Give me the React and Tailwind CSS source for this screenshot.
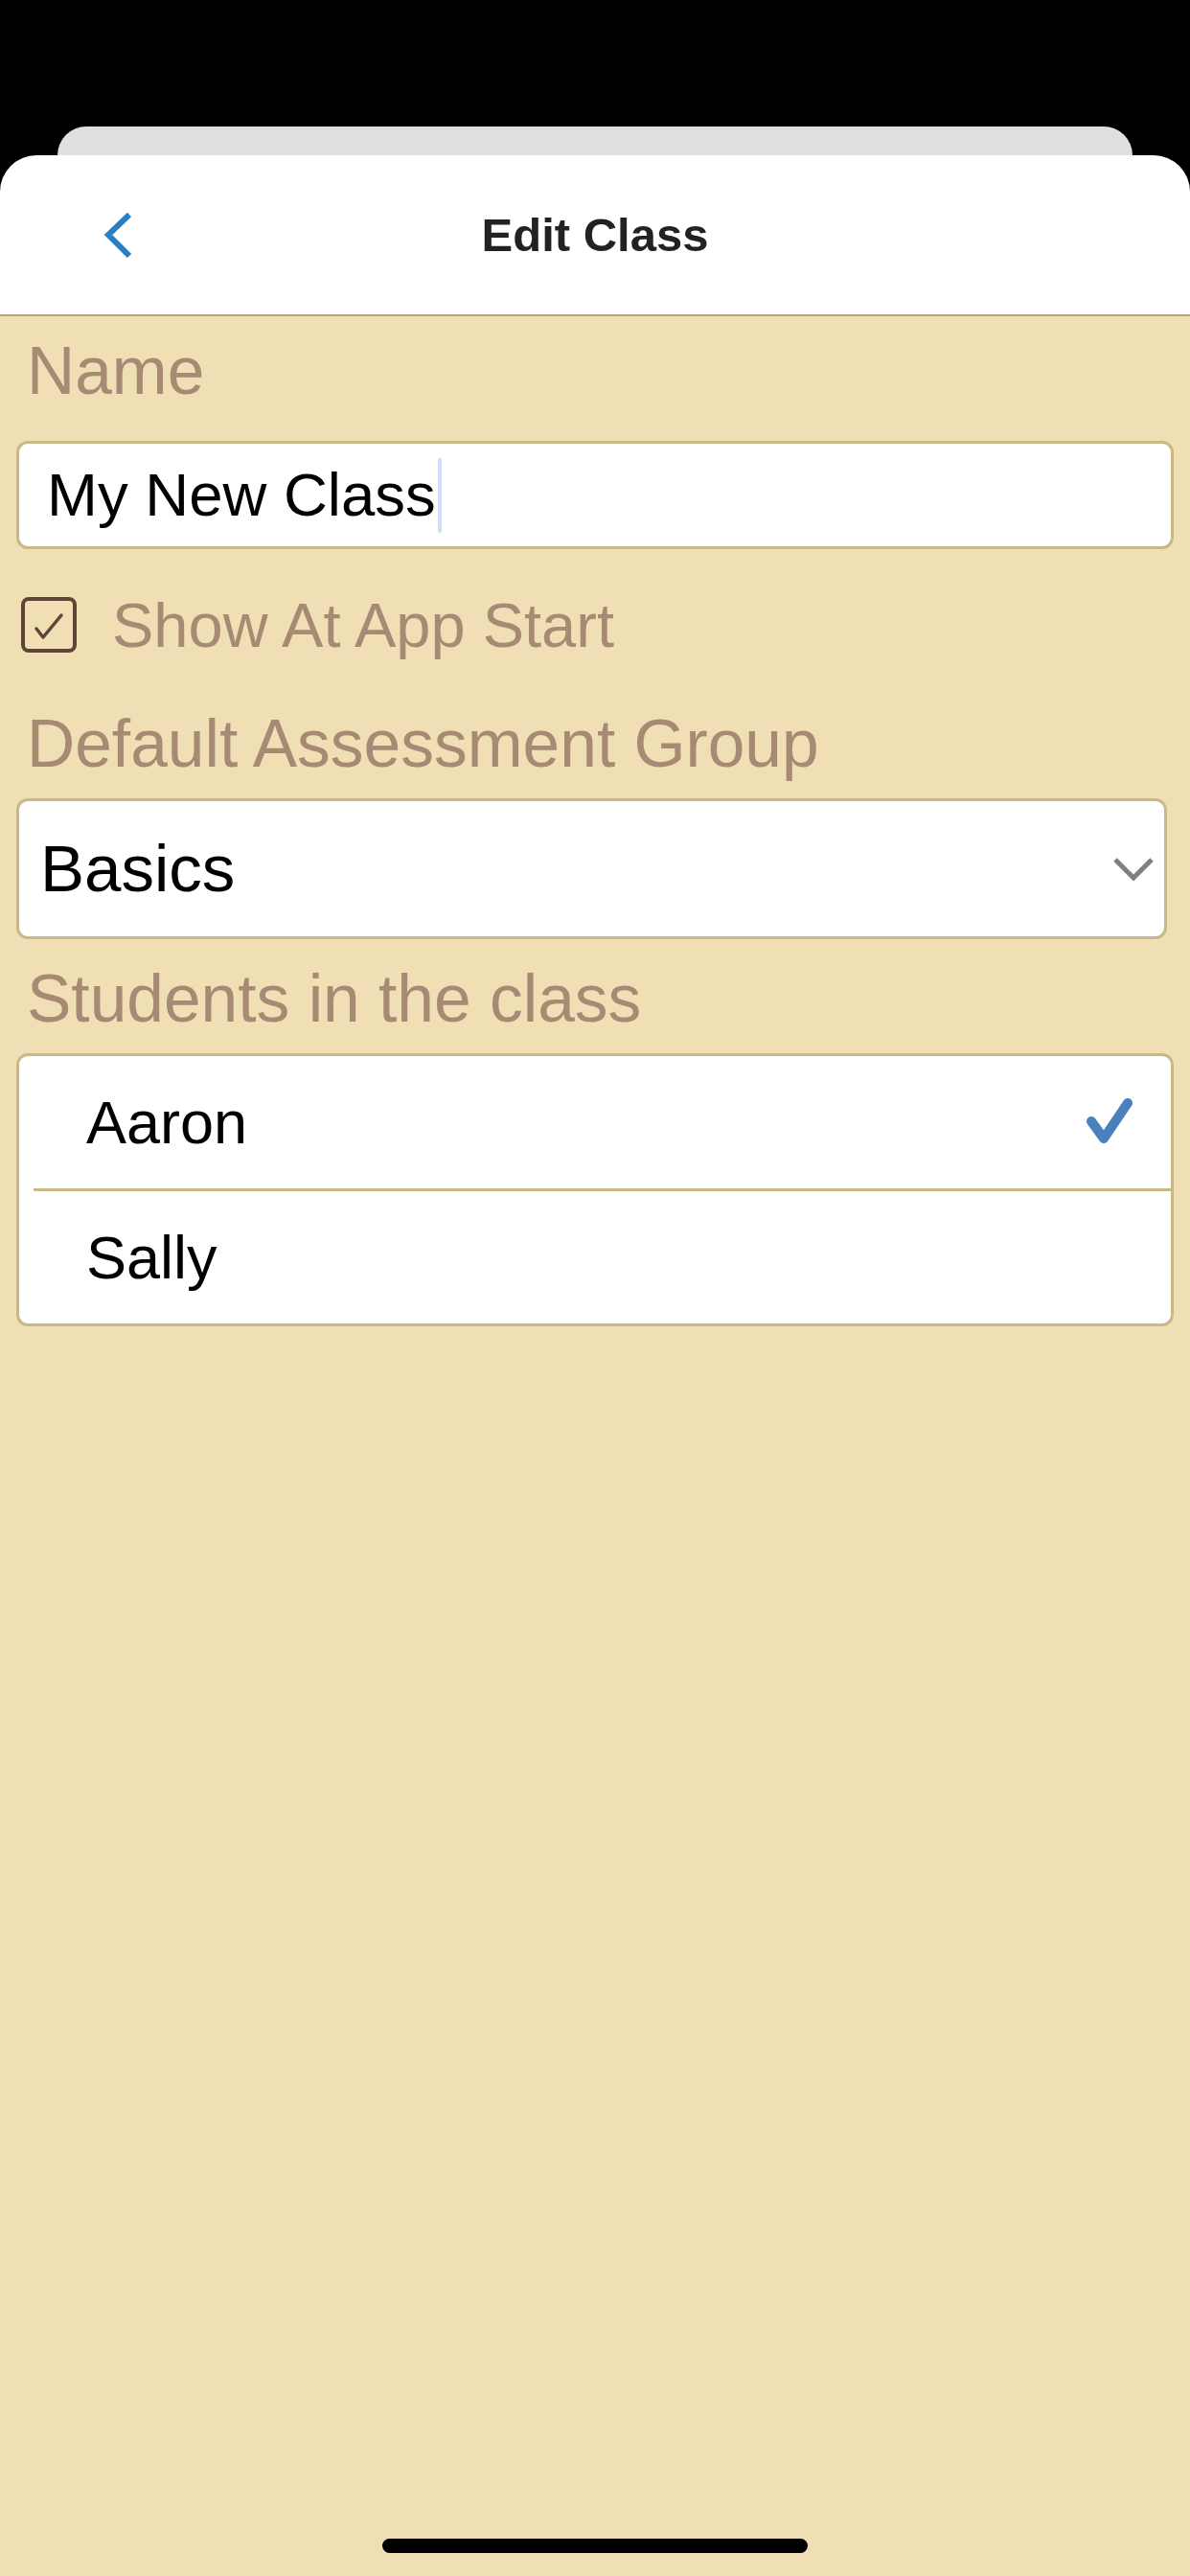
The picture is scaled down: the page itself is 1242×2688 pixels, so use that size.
import React from 'react';

const font = { fontFamily: '"Liberation Sans", Arial, sans-serif' };

const Label = ({ children, className }) => (
  <div className={`pl-[11px] text-[69.5px] leading-[68px] text-[#a68a74] ${className}`}>{children}</div>
);

const StudentRow = ({ name, selected }) => (
  <div className="flex h-[138px] items-center justify-between pl-[70px] pr-[36px]">
    <span className="text-[63px] leading-none text-black">{name}</span>
    {selected && (
      <svg width="56" height="56" viewBox="0 0 56 56" fill="none">
        <path d="M9 27 L22 45 L47 8" stroke="#4a80bb" strokeWidth="10" strokeLinecap="round" strokeLinejoin="round" />
      </svg>
    )}
  </div>
);

export default function App() {
  return (
    <div className="flex h-[2688px] flex-col bg-black pt-[132px]" style={font}>
      {/* sheet behind */}
      <div className="mx-[60px] h-[30px] rounded-t-[30px] bg-[#e0e0e0]" />

      <div className="flex flex-1 flex-col overflow-hidden rounded-t-[38px] bg-white">
        {/* nav bar */}
        <div className="grid h-[168px] grid-cols-[1fr_auto_1fr] items-center border-b-2 border-[#b3a47c]">
          <div className="pl-[104px]">
            <svg width="40" height="52" viewBox="0 0 40 52" fill="none">
              <path d="M31 5 L9 26 L31 48" stroke="#2a7fc2" strokeWidth="6" />
            </svg>
          </div>
          <div className="text-[49px] font-bold leading-none text-[#222222]">Edit Class</div>
          <div />
        </div>

        {/* body */}
        <div className="flex flex-1 flex-col bg-[#f0dfb5] px-[17px]">
          <Label className="mt-[23px]">Name</Label>

          <div className="mt-[39px] flex h-[113px] items-center rounded-[12px] border-[3px] border-[#c9b987] bg-white pl-[29px]">
            <span className="text-[63.5px] leading-none text-black">My New Class</span>
            <span className="ml-[2px] h-[78px] w-[4px] rounded-full bg-[#cfdcfb]" />
          </div>

          <div className="mt-[50px] flex h-[58px] items-center pl-[5px]">
            <svg width="58" height="58" viewBox="0 0 58 58" fill="none">
              <rect x="2" y="2" width="54" height="54" rx="6" stroke="#5e4535" strokeWidth="4" />
              <path d="M16 33 L23 42 L42 19" stroke="#5e4535" strokeWidth="3.5" strokeLinecap="round" strokeLinejoin="round" />
            </svg>
            <span className="ml-[37px] text-[65px] leading-none text-[#a68a74]">Show At App Start</span>
          </div>

          <Label className="mt-[61px]">Default Assessment Group</Label>

          <div className="mr-[7px] mt-[23px] flex h-[147px] items-center justify-between rounded-[12px] border-[3px] border-[#c9b987] bg-white pl-[22px] pr-[7px]">
            <span className="text-[69px] leading-none text-black">Basics</span>
            <svg width="50" height="30" viewBox="0 0 50 30" fill="none">
              <path d="M6 5 L25 24 L44 5" stroke="#7f7f7f" strokeWidth="5" />
            </svg>
          </div>

          <Label className="mt-[28px]">Students in the class</Label>

          <div className="mt-[23px] flex flex-col rounded-[12px] border-[3px] border-[#c9b987] bg-white">
            <StudentRow name="Aaron" selected />
            <div className="ml-[15px] h-[3px] bg-[#c9b987]" />
            <StudentRow name="Sally" />
          </div>

          <div className="mx-auto mb-[24px] mt-auto h-[15px] w-[444px] rounded-full bg-black" />
        </div>
      </div>
    </div>
  );
}
